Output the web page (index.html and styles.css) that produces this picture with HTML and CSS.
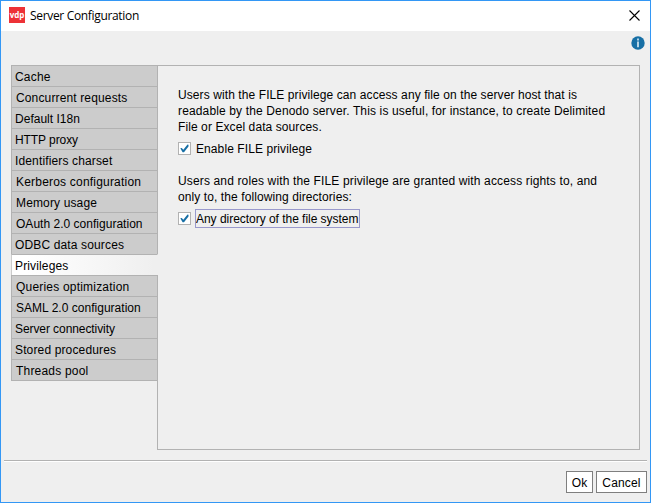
FILE: index.html
```html
<!DOCTYPE html>
<html lang="en">
<head>
<meta charset="utf-8">
<title>Server Configuration</title>
<link rel="stylesheet" href="styles.css">
</head>
<body>
<div class="window">
  <header class="titlebar">
    <span class="logo">vdp</span>
    <h1 class="title">Server Configuration</h1>
    <svg class="close" width="11" height="11" viewBox="0 0 11 11"><path d="M.5 .5l10 10M10.500 .5l-10 10"/></svg>
  </header>
  <div class="toolbar">
    <svg class="info" width="14" height="14" viewBox="0 0 14 14"><circle cx="7" cy="7" r="6.700"/><path d="M6 2.500h2v2H6zM6 5.500h2v5.700H6z"/></svg>
  </div>
  <div class="content">
    <nav class="tabs">
      <span class="tab loose">Cache</span>
      <span class="tab inset">Concurrent requests</span>
      <span class="tab snug">Default I18n</span>
      <span class="tab tight">HTTP proxy</span>
      <span class="tab">Identifiers charset</span>
      <span class="tab inset loose">Kerberos configuration</span>
      <span class="tab inset">Memory usage</span>
      <span class="tab inset snug">OAuth 2.0 configuration</span>
      <span class="tab">ODBC data sources</span>
      <span class="tab selected">Privileges</span>
      <span class="tab inset loose">Queries optimization</span>
      <span class="tab inset snug">SAML 2.0 configuration</span>
      <span class="tab tight">Server connectivity</span>
      <span class="tab">Stored procedures</span>
      <span class="tab inset loose">Threads pool</span>
    </nav>
    <main class="panel">
      <p class="text"><span class="compact">Users with the FILE privilege can access any file on the server host that is</span><br>readable by the Denodo server. This is useful, for instance, to create Delimited<br><span class="compact">File or Excel data sources.</span></p>
      <div class="option">
        <svg class="check" width="13" height="13" viewBox="0 0 13 13"><rect x=".5" y=".5" width="12" height="12"/><path d="M2.300 6.300l1.500-.3 1.500 1.800L9.500 2.500l1 .2v1.800L6 10.300H4.600z"/></svg>
        <span class="label compact">Enable FILE privilege</span>
      </div>
      <p class="text second">Users and roles with the FILE privilege are granted with access rights to, and<br><span class="compact">only to, the following directories:</span></p>
      <div class="option">
        <svg class="check" width="13" height="13" viewBox="0 0 13 13"><rect x=".5" y=".5" width="12" height="12"/><path d="M2.300 6.300l1.500-.3 1.500 1.800L9.500 2.500l1 .2v1.800L6 10.300H4.600z"/></svg>
        <span class="label focused">Any directory of the file system</span>
      </div>
    </main>
  </div>
  <footer class="footer">
    <button class="button ok">Ok</button>
    <button class="button cancel">Cancel</button>
  </footer>
</div>
</body>
</html>
```
FILE: styles.css
```css
* { box-sizing: border-box; }
body {
  margin: 0;
  font: 12px/16px "Liberation Sans", Arial, sans-serif;
  letter-spacing: .14px;
  color: #000;
}
.window {
  display: flex;
  flex-direction: column;
  width: 651px;
  height: 503px;
  border: 1px solid #3397f5;
  background: #efefef;
}
.titlebar {
  display: flex;
  align-items: center;
  height: 30px;
  padding: 0 10px 2px 8px;
  background: #fff;
}
.logo {
  width: 16px;
  height: 16px;
  background: #ed3237;
  color: #fff;
  font: bold 8px/16px "Open Sans", sans-serif;
  letter-spacing: 0;
  text-align: center;
}
.title {
  margin: 2px auto 0 5px;
  font: 12px/16px "Open Sans", sans-serif;
  letter-spacing: -.33px;
}
.close { fill: none; stroke: #000; stroke-width: 1.1; }
.toolbar {
  display: flex;
  justify-content: flex-end;
  height: 34px;
  padding: 5px 5px 0 0;
}
.info circle { fill: #176fa5; }
.info path { fill: #b5d4e5; }
.content {
  display: flex;
  height: 385px;
  margin: 0 10px;
}
.tabs {
  z-index: 1;
  width: 147px;
  height: 316px;
  margin-right: -1px;
  border-bottom: 1px solid #b2b2b2;
}
.tab {
  display: block;
  height: 21px;
  padding: 2px 0 0 3px;
  border: solid #b2b2b2;
  border-width: 1px 1px 0;
  background: #ccc;
  line-height: 18px;
  white-space: nowrap;
}
.tab.inset { padding-left: 4px; }
.tab.loose { letter-spacing: .2px; }
.tab.snug { letter-spacing: .02px; }
.tab.tight { letter-spacing: -.08px; }
.tab.selected {
  border-left-color: #ccc;
  border-right-color: #efefef;
  background: linear-gradient(90deg, #fff 10%, #efefef 98%);
}
.panel {
  flex: 1;
  padding: 21px 20px;
  border: 1px solid #b2b2b2;
}
.compact { letter-spacing: .09px; }
.text { margin: 0; white-space: nowrap; }
.text.second { margin-top: 15px; }
.option {
  display: flex;
  align-items: center;
  height: 19px;
  margin-top: 4px;
}
.check rect { fill: #fff; stroke: #b2b2b2; }
.check path { fill: #176fa5; }
.label {
  height: 19px;
  margin-left: 4px;
  padding: 2px 0 0 1px;
  line-height: 17px;
  white-space: nowrap;
}
.label.focused {
  width: 165px;
  padding: 1px 0 0;
  border: 1px solid #9999cc;
  letter-spacing: -.03px;
}
.footer {
  display: flex;
  justify-content: flex-end;
  gap: 3px;
  margin: 10px 3px 0;
  padding-top: 10px;
  border-top: 1px solid #b2b2b2;
  box-shadow: inset 0 1px #fff;
}
.button {
  height: 22px;
  padding: 2px 0 0;
  border: 1px solid #7f7f7f;
  border-radius: 0;
  background: #fff;
  color: #000;
  font: inherit;
  letter-spacing: .15px;
}
.ok { width: 27px; }
.cancel { width: 51px; }
```
